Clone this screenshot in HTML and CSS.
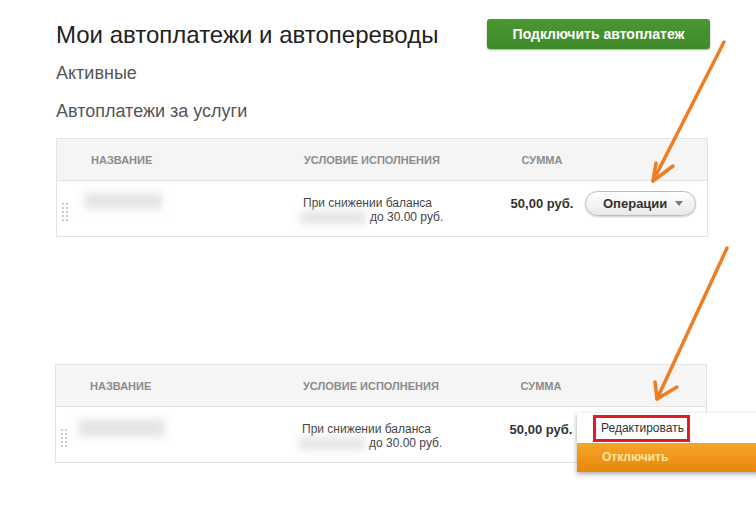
FILE: index.html
```html
<!DOCTYPE html>
<html lang="ru">
<head>
<meta charset="utf-8">
<title>Мои автоплатежи и автопереводы</title>
<link rel="stylesheet" href="styles.css">
</head>
<body>
<div class="page">
  <div class="header">
    <h1 class="title">Мои автоплатежи и автопереводы</h1>
    <button class="btn-green">Подключить автоплатеж</button>
  </div>
  <div class="sub sub-active">Активные</div>
  <div class="sub sub-services">Автоплатежи за услуги</div>

  <div class="table">
    <div class="thead">
      <div class="th th-name">Название</div>
      <div class="th th-cond">Условие исполнения</div>
      <div class="th th-sum">Сумма</div>
      <div class="th"></div>
    </div>
    <div class="trow">
      <div class="td td-name"><span class="handle"></span><span class="blur blur-name"></span></div>
      <div class="td td-cond">
        <div>При снижении баланса</div>
        <div class="cond-line"><span class="blur blur-phone"></span><span>до 30.00 руб.</span></div>
      </div>
      <div class="td td-sum">50,00 руб.</div>
      <div class="td td-ops"><button class="btn-ops">Операции<span class="caret"></span></button></div>
    </div>
  </div>

  <div class="table table-second">
    <div class="thead">
      <div class="th th-name">Название</div>
      <div class="th th-cond">Условие исполнения</div>
      <div class="th th-sum">Сумма</div>
      <div class="th"></div>
    </div>
    <div class="trow">
      <div class="td td-name"><span class="handle"></span><span class="blur blur-name blur-name-wide"></span></div>
      <div class="td td-cond">
        <div>При снижении баланса</div>
        <div class="cond-line"><span class="blur blur-phone"></span><span>до 30.00 руб.</span></div>
      </div>
      <div class="td td-sum">50,00 руб.</div>
      <div class="td td-ops"></div>
      <div class="menu">
        <div class="menu-item menu-edit"><span class="mark">Редактировать</span></div>
        <div class="menu-item menu-off">Отключить</div>
      </div>
    </div>
  </div>
</div>

<svg class="arrows" width="756" height="532" viewBox="0 0 756 532">
  <g fill="none" stroke="#f07d22" stroke-width="3.5" stroke-linecap="round" stroke-linejoin="round">
    <path d="M724 42 L653 181"/>
    <path d="M656 163 L653 181 L673 166"/>
    <path d="M727 248 L657 399"/>
    <path d="M655 382 L657 399 L677 387"/>
  </g>
</svg>
</body>
</html>
```

FILE: styles.css
```css
html, body {
  margin: 0;
  padding: 0;
  background: #ffffff;
  overflow: hidden;
}
body {
  position: relative;
  width: 756px;
  height: 532px;
  font-family: "Liberation Sans", Arial, sans-serif;
  color: #333;
}
.page {
  padding: 19px 0 0 56px;
  width: 654px;
}
.header {
  display: flex;
  justify-content: space-between;
  align-items: flex-start;
}
.title {
  margin: 1px 0 0 0;
  font-size: 24px;
  line-height: 30px;
  font-weight: normal;
  color: #222;
}
.btn-green {
  width: 223px;
  height: 30px;
  border: none;
  border-radius: 3px;
  background: linear-gradient(#48982f, #3f8a2b);
  box-shadow: 0 1px 2px rgba(0, 0, 0, 0.35);
  color: #fff;
  font-family: "Liberation Sans", Arial, sans-serif;
  font-size: 14px;
  font-weight: bold;
  padding: 0;
}
.sub {
  font-size: 18px;
  line-height: 21px;
  color: #555;
}
.sub-active {
  margin-top: 13px;
}
.sub-services {
  margin-top: 17px;
}
.table {
  margin-top: 16px;
  width: 650px;
  border: 1px solid #e3e3e3;
}
.table-second {
  margin-top: 127px;
  margin-left: -1px;
}
.thead,
.trow {
  display: grid;
  grid-template-columns: 242px 200px 86px 1fr;
}
.thead {
  height: 41px;
  align-items: center;
  background: #f5f5f5;
  border-bottom: 1px solid #e2e2e2;
}
.th {
  font-size: 11px;
  font-weight: bold;
  color: #8c8c8c;
  text-transform: uppercase;
}
.th-name {
  padding-left: 34px;
}
.th-cond {
  padding-left: 5px;
}
.th-sum {
  text-align: center;
}
.trow {
  position: relative;
  height: 55px;
  align-items: start;
}
.td-name {
  display: flex;
  align-items: flex-start;
  padding-left: 4px;
}
.handle {
  display: block;
  width: 8px;
  height: 20px;
  margin-top: 21px;
  background-image: radial-gradient(circle, #c9c9c9 0.9px, transparent 1.3px);
  background-size: 4px 4px;
}
.blur {
  display: block;
  background: #e4e4e4;
  filter: blur(4px);
}
.blur-name {
  width: 78px;
  height: 16px;
  margin-left: 15px;
  margin-top: 12px;
}
.blur-name-wide {
  width: 86px;
  height: 18px;
  margin-left: 11px;
  margin-top: 12px;
}
.td-cond {
  padding-top: 15px;
  padding-left: 4px;
  font-size: 12px;
  line-height: 14px;
  color: #444;
}
.cond-line {
  display: flex;
}
.blur-phone {
  width: 66px;
  height: 13px;
  margin-left: -3px;
  margin-right: 4px;
  margin-top: 1px;
}
.td-sum {
  padding-top: 15px;
  text-align: center;
  font-size: 13px;
  line-height: 16px;
  font-weight: bold;
  color: #333;
}
.td-ops {
  padding-top: 10px;
}
.btn-ops {
  display: flex;
  align-items: center;
  width: 111px;
  height: 25px;
  padding: 0 0 0 17px;
  border: 1px solid #bdbdbd;
  border-radius: 13px;
  background: linear-gradient(#ffffff, #e9e9e9);
  box-shadow: 0 1px 2px rgba(0, 0, 0, 0.2);
  font-family: "Liberation Sans", Arial, sans-serif;
  font-size: 13px;
  font-weight: bold;
  color: #333;
}
.caret {
  display: block;
  width: 0;
  height: 0;
  margin-left: 8px;
  border-left: 4px solid transparent;
  border-right: 4px solid transparent;
  border-top: 5px solid #7a7a7a;
}
.menu {
  position: absolute;
  top: 6px;
  left: 521px;
  width: 200px;
  box-shadow: 0 2px 5px rgba(0, 0, 0, 0.35);
}
.menu-item {
  box-sizing: border-box;
}
.menu-edit {
  height: 30px;
  padding: 2px 0 0 16px;
  background: #fff;
}
.mark {
  display: inline-block;
  height: 21px;
  line-height: 21px;
  padding: 0 3px 0 5px;
  border: 3px solid #e01b24;
  font-size: 12px;
  color: #333;
}
.menu-off {
  height: 29px;
  line-height: 29px;
  padding-left: 25px;
  background: linear-gradient(#f6a528, #e8860d);
  font-size: 12px;
  font-weight: bold;
  color: #ffe6a3;
}
.arrows {
  position: absolute;
  top: 0;
  left: 0;
  pointer-events: none;
}
```
